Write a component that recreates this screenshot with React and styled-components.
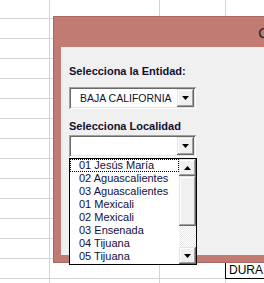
import styled, { createGlobalStyle } from "styled-components";

const GlobalStyle = createGlobalStyle`
  html, body { margin: 0; padding: 0; overflow: hidden; background: #fff; }
  body { font-family: "Liberation Sans", Arial, sans-serif; }
`;

const raised = `
  box-shadow:
    inset -1px -1px #696969,
    inset 1px 1px #e3e3e3,
    inset -2px -2px #a0a0a0,
    inset 2px 2px #fff;
`;

const Sheet = styled.div`
  position: relative;
  width: 264px;
  height: 283px;
  overflow: hidden;
  display: grid;
  grid-template-columns: 50px 110px 66px 60px;
  grid-template-rows: 19px;
  grid-auto-rows: 20px;
`;

const Cell = styled.div`
  box-sizing: border-box;
  border-right: 1px solid #d4d4d4;
  border-bottom: 1px solid ${(p) => (p.$boxed ? "#000" : "#d4d4d4")};
  box-shadow: ${(p) => (p.$boxed ? "-1px 0 0 #000" : "none")};
  font-size: 12px;
  color: #000;
  padding: 4px 0 0 3px;
  white-space: nowrap;
  overflow: hidden;
`;

const Window = styled.div`
  position: absolute;
  left: 53px;
  top: 16px;
  width: 260px;
  height: 247px;
  box-sizing: border-box;
  background: #c17b73;
  border: 1px solid #a9675f;
  padding: 0 0 7px 7px;
  display: flex;
  flex-direction: column;
`;

const TitleBar = styled.div`
  height: 30px;
  flex: none;
  padding-left: 197px;
  display: flex;
  align-items: center;
  font-family: "Noto Sans", "Open Sans", sans-serif;
  font-size: 15px;
  color: #222;
  white-space: nowrap;
`;

const Client = styled.div`
  flex: 1;
  background: #f0f0f0;
  padding: 18px 0 0 8px;
`;

const Label = styled.div`
  font-weight: bold;
  font-size: 11px;
  line-height: 13px;
  color: #101030;
  margin-bottom: ${(p) => p.$gap}px;
`;

const ComboWrap = styled.div`
  position: relative;
  width: 127px;
  margin-bottom: 11px;
`;

const Combo = styled.div`
  box-sizing: border-box;
  width: 127px;
  height: 22px;
  padding: 2px;
  background: #fff;
  display: flex;
  box-shadow:
    inset 1px 1px #a0a0a0,
    inset -1px -1px #fff,
    inset 2px 2px #696969,
    inset -2px -2px #e3e3e3;
`;

const ComboText = styled.div`
  flex: 1;
  padding-left: 9px;
  display: flex;
  align-items: center;
  font-size: 10.5px;
  color: #101030;
  white-space: nowrap;
`;

const ArrowButton = styled.div`
  width: 17px;
  height: ${(p) => p.$h || 18}px;
  flex: none;
  background: #f0f0f0;
  display: flex;
  align-items: center;
  justify-content: center;
  ${raised}
`;

const DropList = styled.div`
  position: absolute;
  top: 23px;
  left: 0;
  width: 128px;
  height: 107px;
  box-sizing: border-box;
  border: 1px solid #000;
  background: #fff;
  display: flex;
  z-index: 2;
`;

const Items = styled.div`
  flex: 1;
  overflow: hidden;
`;

const Item = styled.div`
  height: 13px;
  box-sizing: border-box;
  padding-left: 9px;
  font-size: 11px;
  line-height: 13px;
  color: #101040;
  white-space: nowrap;
  outline: ${(p) => (p.$focus ? "1px dotted #000" : "none")};
  outline-offset: -1px;
`;

const ScrollBar = styled.div`
  width: 17px;
  display: flex;
  flex-direction: column;
`;

const Thumb = styled.div`
  height: 50px;
  background: #f0f0f0;
  ${raised}
`;

const Track = styled.div`
  flex: 1;
  background: repeating-conic-gradient(#e8e8e8 0 25%, #fff 0 50%) 0 0 / 2px 2px;
`;

const Arrow = ({ up }) => (
  <svg width="7" height="4" viewBox="0 0 7 4">
    <polygon points={up ? "3.5,0 7,4 0,4" : "0,0 7,0 3.5,4"} fill="#000" />
  </svg>
);

const localidades = [
  "01 Jesús María",
  "02 Aguascalientes",
  "03 Aguascalientes",
  "01 Mexicali",
  "02 Mexicali",
  "03 Ensenada",
  "04 Tijuana",
  "05 Tijuana",
];

export default function App() {
  const cells = [];
  for (let r = 0; r < 15; r++) {
    for (let c = 0; c < 4; c++) {
      const boxed = r === 13 && c === 3;
      cells.push(
        <Cell key={`${r}-${c}`} $boxed={boxed}>
          {boxed ? "DURA" : ""}
        </Cell>
      );
    }
  }

  return (
    <>
      <GlobalStyle />
      <Sheet>
        {cells}
        <Window>
          <TitleBar>C</TitleBar>
          <Client>
            <Label $gap={9}>Selecciona la Entidad:</Label>
            <ComboWrap>
              <Combo>
                <ComboText>BAJA CALIFORNIA</ComboText>
                <ArrowButton>
                  <Arrow />
                </ArrowButton>
              </Combo>
            </ComboWrap>
            <Label $gap={2}>Selecciona Localidad</Label>
            <ComboWrap>
              <Combo>
                <ComboText />
                <ArrowButton>
                  <Arrow />
                </ArrowButton>
              </Combo>
              <DropList>
                <Items>
                  {localidades.map((l, i) => (
                    <Item key={i} $focus={i === 0}>
                      {l}
                    </Item>
                  ))}
                </Items>
                <ScrollBar>
                  <ArrowButton $h={17}>
                    <Arrow up />
                  </ArrowButton>
                  <Thumb />
                  <Track />
                  <ArrowButton $h={17}>
                    <Arrow />
                  </ArrowButton>
                </ScrollBar>
              </DropList>
            </ComboWrap>
          </Client>
        </Window>
      </Sheet>
    </>
  );
}
